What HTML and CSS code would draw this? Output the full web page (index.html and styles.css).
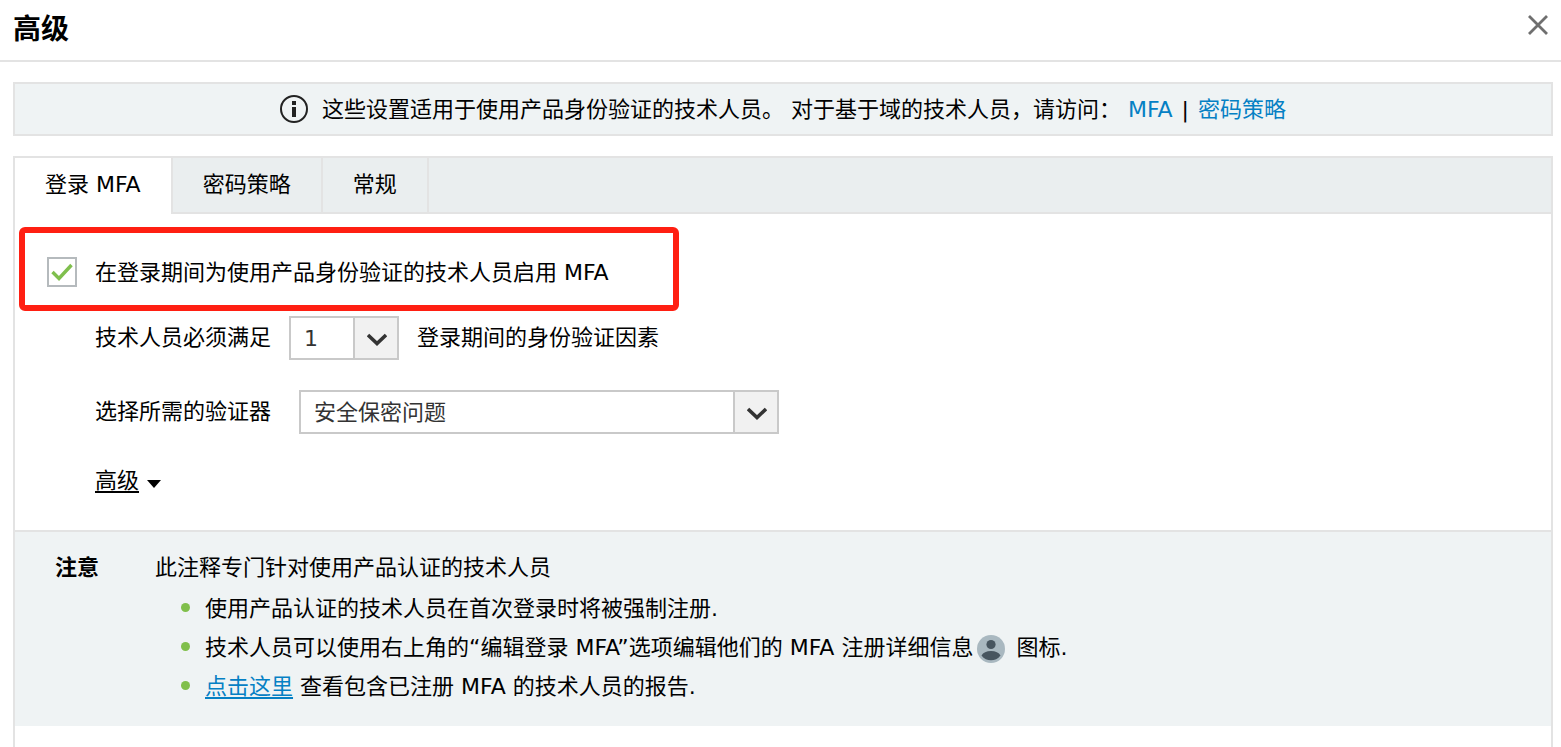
FILE: index.html
```html
<!DOCTYPE html>
<html lang="zh-CN">
<head>
    <meta charset="UTF-8">
    <meta name="viewport" content="width=device-width, initial-scale=1.0">
    <title>高级</title>
    <link rel="stylesheet" href="styles.css">
</head>
<body>
    <header class="header">
        <h1>高级</h1>
        <button class="close-button" type="button" aria-label="关闭">
            <svg width="20" height="20" viewBox="0 0 20 20"><path d="M1 1L19 19M19 1L1 19" fill="none" stroke="#6f6f6f" stroke-width="2.8"/></svg>
        </button>
    </header>

    <main class="content">
        <div class="info-bar">
            <svg class="info-icon" width="28" height="28" viewBox="0 0 28 28">
                <circle cx="14" cy="14" r="13" fill="none" stroke="#222" stroke-width="2"/>
                <path d="M12 6h4v4h-4zM12 12h4v10h-4z" fill="#222"/>
            </svg>
            <p>这些设置适用于使用产品身份验证的技术人员。 对于基于域的技术人员，请访问： <a href="#">MFA</a> <span class="separator">|</span> <a href="#">密码策略</a></p>
        </div>

        <div class="panel">
            <div class="tabs" role="tablist">
                <button class="tab active" type="button" role="tab" aria-selected="true">登录 MFA</button>
                <button class="tab" type="button" role="tab" aria-selected="false">密码策略</button>
                <button class="tab" type="button" role="tab" aria-selected="false">常规</button>
            </div>

            <form class="settings">
                <div class="enable-row">
                    <input type="checkbox" id="enableMfa" class="checkbox" checked>
                    <label for="enableMfa">在登录期间为使用产品身份验证的技术人员启用 MFA</label>
                </div>

                <div class="field">
                    <label for="factorCount">技术人员必须满足</label>
                    <div class="select-box small">
                        <select id="factorCount">
                            <option>1</option>
                            <option>2</option>
                            <option>3</option>
                        </select>
                        <span class="arrow"><svg width="20" height="14" viewBox="0 0 20 14"><path d="M1 2L10 10.500L19 2" fill="none" stroke="#333" stroke-width="3.600"/></svg></span>
                    </div>
                    <span>登录期间的身份验证因素</span>
                </div>

                <div class="field authenticator">
                    <label for="authenticator">选择所需的验证器</label>
                    <div class="select-box large">
                        <select id="authenticator">
                            <option>安全保密问题</option>
                        </select>
                        <span class="arrow"><svg width="20" height="14" viewBox="0 0 20 14"><path d="M1 2L10 10.500L19 2" fill="none" stroke="#333" stroke-width="3.600"/></svg></span>
                    </div>
                </div>

                <button class="advanced" type="button">
                    <span>高级</span>
                    <svg width="14" height="8" viewBox="0 0 14 8"><path d="M0 0h14L7 8z"/></svg>
                </button>
            </form>

            <section class="note">
                <h2>注意</h2>
                <div class="note-text">
                    <p>此注释专门针对使用产品认证的技术人员</p>
                    <ul>
                        <li>使用产品认证的技术人员在首次登录时将被强制注册.</li>
                        <li>技术人员可以使用右上角的“编辑登录 MFA”选项编辑他们的 MFA 注册详细信息<svg class="user-icon" width="28" height="28" viewBox="0 0 28 28">
                            <circle cx="14" cy="14" r="14" fill="#a9b8c0"/>
                            <circle cx="14" cy="9.500" r="4.600" fill="#47555f"/>
                            <path d="M4.500 20.500C6 17.500 9.500 16 14 16s8 1.500 9.500 4.500C21 24 17.700 25.300 14 25.300S7 24 4.500 20.500z" fill="#47555f"/>
                        </svg> 图标.</li>
                        <li><a href="#">点击这里</a> 查看包含已注册 MFA 的技术人员的报告.</li>
                    </ul>
                </div>
            </section>
        </div>
    </main>
</body>
</html>
```
FILE: styles.css
```css
* {
    box-sizing: border-box;
}

body {
    margin: 0;
    min-height: 100vh;
    display: flex;
    flex-direction: column;
    background-color: white;
    color: #000;
    font-family: "DejaVu Sans", "Noto Sans CJK SC", sans-serif;
    font-size: 22px;
    line-height: 32px;
}

h1,
h2,
p,
ul {
    margin: 0;
    padding: 0;
}

button,
select {
    font: inherit;
    color: inherit;
    border: none;
    background: none;
    padding: 0;
    margin: 0;
    cursor: pointer;
}

svg {
    display: block;
}

a {
    color: #0580c4;
}

.header {
    display: flex;
    justify-content: space-between;
    align-items: center;
    padding: 10px 13px;
    border-bottom: 2px solid #e3e3e3;
}

.header h1 {
    font-size: 28px;
    line-height: 40px;
}

.close-button {
    padding-bottom: 10px;
}

.content {
    flex: 1;
    display: flex;
    flex-direction: column;
    gap: 20px;
    padding: 20px 8px 0 13px;
}

.info-bar {
    display: flex;
    justify-content: center;
    align-items: center;
    gap: 14px;
    padding: 10px 9px 8px;
    border: 2px solid #e3e3e3;
    background-color: #eff3f4;
}

.info-icon {
    flex: none;
    margin-bottom: 2px;
}

.info-bar a {
    text-decoration: none;
}

.separator {
    margin: 0 2px;
}

.panel {
    flex: 1;
    border: 2px solid #e3e3e3;
    border-bottom: none;
}

.tabs {
    display: flex;
    background-color: #eaeeef;
    box-shadow: inset 0 -2px #e3e3e3;
}

.tab {
    padding: 11px 30px 13px;
    border-right: 2px solid #e3e3e3;
}

.tab.active {
    background-color: white;
}

.settings {
    padding: 13px 4px 33px;
}

.enable-row {
    display: flex;
    align-items: center;
    gap: 18px;
    max-width: 660px;
    padding: 22px 22px 16px;
    border: 6px solid #ff1f12;
    border-radius: 6px;
}

.enable-row label {
    padding-top: 2px;
}

.checkbox {
    appearance: none;
    flex: none;
    width: 30px;
    height: 30px;
    margin: 0;
    border: 2px solid #b5babd;
    background: white center no-repeat;
}

.checkbox:checked {
    background-image: url("data:image/svg+xml,%3Csvg xmlns='http://www.w3.org/2000/svg' width='22' height='18' viewBox='0 0 22 18'%3E%3Cpath d='M1.500 9L8 15.500L20.500 2' fill='none' stroke='%237fbf4d' stroke-width='3.400'/%3E%3C/svg%3E");
}

.field {
    display: flex;
    align-items: center;
    gap: 18px;
    margin: 5px 0 0 76px;
}

.field.authenticator {
    gap: 28px;
    margin-top: 30px;
}

.select-box {
    position: relative;
}

.select-box.small {
    width: 110px;
}

.select-box.large {
    width: 480px;
}

.select-box select {
    appearance: none;
    display: block;
    width: 100%;
    height: 44px;
    padding: 2px 50px 0 13px;
    border: 2px solid #c9c9c9;
    background-color: white;
    color: #333;
}

/* arrow part on the right of the select */
.arrow {
    position: absolute;
    top: 2px;
    right: 2px;
    bottom: 2px;
    width: 44px;
    display: flex;
    align-items: center;
    justify-content: center;
    padding: 4px 0 0 2px;
    border-left: 2px solid #c9c9c9;
    background-color: #f1f1f1;
    pointer-events: none;
}

.advanced {
    display: flex;
    align-items: center;
    gap: 8px;
    margin: 31px 0 0 76px;
}

.advanced span {
    text-decoration: underline;
    text-decoration-thickness: 2px;
    text-underline-offset: 3px;
}

.advanced svg {
    margin-top: 6px;
}

.note {
    display: flex;
    gap: 56px;
    padding: 20px 40px;
    border-top: 2px solid #e3e3e3;
    background-color: #eff3f4;
}

.note h2 {
    flex: none;
    font-size: 22px;
    line-height: 32px;
}

.note ul {
    padding: 5px 0 0 50px;
    list-style: none;
}

.note li {
    position: relative;
    line-height: 39px;
}

.note li::before {
    content: "";
    position: absolute;
    left: -24px;
    top: 14px;
    width: 9px;
    height: 9px;
    border-radius: 50%;
    background-color: #80bf4b;
}

.note li a {
    text-decoration-thickness: 2px;
    text-underline-offset: 3px;
}

.user-icon {
    display: inline-block;
    vertical-align: middle;
    margin: 0 4px;
}
```
